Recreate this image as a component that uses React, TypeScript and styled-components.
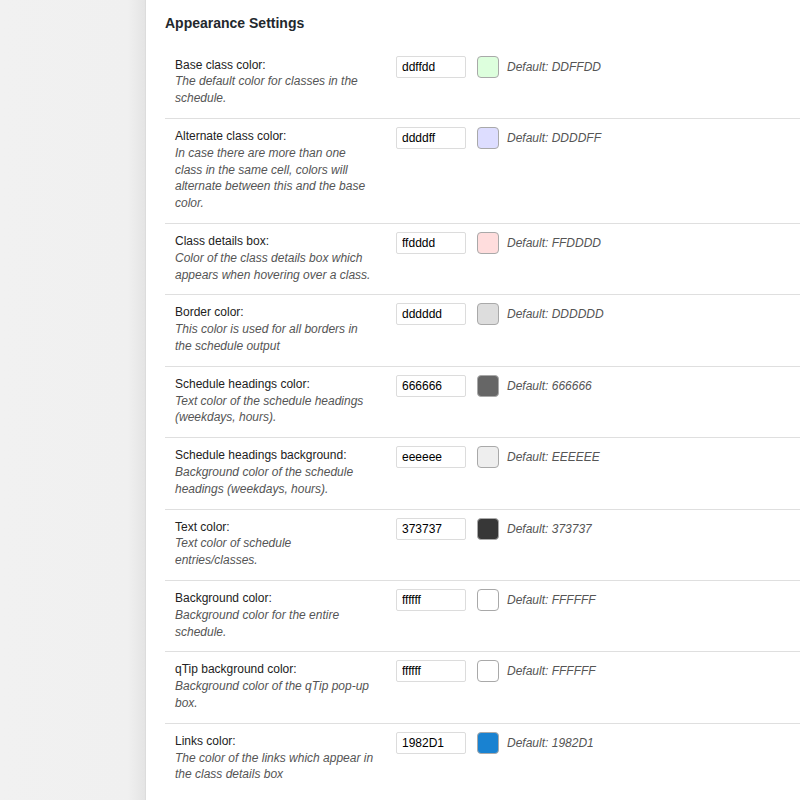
import React from 'react';
import styled, { createGlobalStyle } from 'styled-components';

const GlobalStyle = createGlobalStyle`
    body {
        margin: 0;
        background: #f1f1f1;
        font-family: "Liberation Sans", Arial, sans-serif;
    }
`;

const Page = styled.div`
    display: flex;
    min-height: 800px;
`;

const Sidebar = styled.div`
    width: 145px;
    flex-shrink: 0;
    background: linear-gradient(to right, #f1f1f1 0, #f0f0f0 128px, #e4e4e4 145px);
    border-right: 1px solid #dcdcdc;
`;

const Panel = styled.div`
    flex-grow: 1;
    background: #fff;
    padding: 14px 0 0 19px;
`;

const Heading = styled.h2`
    margin: 0 0 14.6px;
    font-size: 14px;
    font-weight: bold;
    color: #23282d;
    line-height: 19px;
`;

const Row = styled.div`
    display: flex;
    align-items: flex-start;
    padding: 9px 0 11px 10px;
    border-top: ${props => (props.$first ? 'none' : '1px solid #dfdfdf')};
`;

const Label = styled.div`
    width: 200px;
    padding-right: 21px;
    font-size: 12px;
    line-height: 16.8px;
    color: #222;
`;

const Description = styled.div`
    font-style: italic;
    color: #555;
`;

const Field = styled.div`
    display: flex;
    align-items: center;
    gap: 10px;
    margin-top: -1px;
`;

const TextInput = styled.input`
    width: 70px;
    height: 22px;
    box-sizing: border-box;
    padding: 2px 5px;
    border: 1px solid #dcdcdc;
    border-radius: 2px;
    font-family: "Liberation Sans", Arial, sans-serif;
    font-size: 12px;
    color: #000;
    outline: none;
`;

const Swatch = styled.span`
    width: 22px;
    height: 22px;
    box-sizing: border-box;
    border: 1px solid #a9a9a9;
    border-radius: 4px;
    background: ${props => props.$color};
    margin-left: 1px;
`;

const DefaultText = styled.span`
    margin-left: -2px;
    font-size: 12px;
    font-style: italic;
    color: #555;
`;

const settings = [
    { label: 'Base class color:', desc: 'The default color for classes in the schedule.', value: 'ddffdd' },
    {
        label: 'Alternate class color:',
        desc: 'In case there are more than one class in the same cell, colors will alternate between this and the base color.',
        value: 'ddddff',
    },
    {
        label: 'Class details box:',
        desc: 'Color of the class details box which appears when hovering over a class.',
        value: 'ffdddd',
    },
    { label: 'Border color:', desc: 'This color is used for all borders in the schedule output', value: 'dddddd' },
    {
        label: 'Schedule headings color:',
        desc: 'Text color of the schedule headings (weekdays, hours).',
        value: '666666',
    },
    {
        label: 'Schedule headings background:',
        desc: 'Background color of the schedule headings (weekdays, hours).',
        value: 'eeeeee',
    },
    { label: 'Text color:', desc: 'Text color of schedule entries/classes.', value: '373737' },
    { label: 'Background color:', desc: 'Background color for the entire schedule.', value: 'ffffff' },
    { label: 'qTip background color:', desc: 'Background color of the qTip pop-up box.', value: 'ffffff' },
    {
        label: 'Links color:',
        desc: 'The color of the links which appear in the class details box',
        value: '1982D1',
    },
];

export default function App() {
    return (
        <>
            <GlobalStyle />
            <Page>
                <Sidebar />
                <Panel>
                    <Heading>Appearance Settings</Heading>
                    {settings.map((s, i) => (
                        <Row key={s.label} $first={i === 0}>
                            <Label>
                                {s.label}
                                <Description>{s.desc}</Description>
                            </Label>
                            <Field>
                                <TextInput defaultValue={s.value} />
                                <Swatch $color={'#' + s.value} />
                                <DefaultText>Default: {s.value.toUpperCase()}</DefaultText>
                            </Field>
                        </Row>
                    ))}
                </Panel>
            </Page>
        </>
    );
}
